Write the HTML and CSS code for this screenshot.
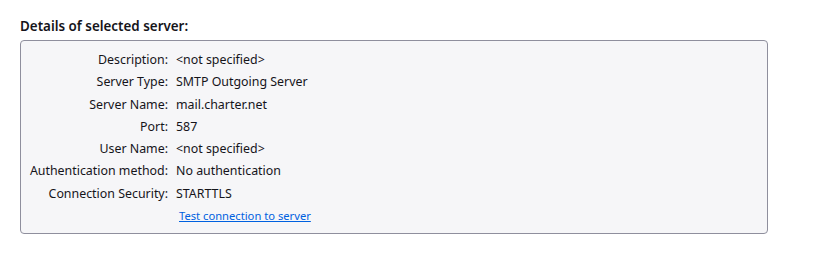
FILE: index.html
```html
<!DOCTYPE html>
<html lang="en">
<head>
  <meta charset="utf-8"/>
  <title>Server details</title>
  <link rel="stylesheet" href="styles.css">
</head>
<body>
  <div class="panel">
    <div class="panel-title">Details of selected server:</div>
    <div class="details">
      <div class="label">Description:</div><div class="value">&lt;not specified&gt;</div>
      <div class="label">Server Type:</div><div class="value">SMTP Outgoing Server</div>
      <div class="label">Server Name:</div><div class="value">mail.charter.net</div>
      <div class="label">Port:</div><div class="value">587</div>
      <div class="label">User Name:</div><div class="value">&lt;not specified&gt;</div>
      <div class="label">Authentication method:</div><div class="value">No authentication</div>
      <div class="label">Connection Security:</div><div class="value">STARTTLS</div>
      <div class="label"></div><div class="value link-row"><a class="test-link" href="#">Test connection to server</a></div>
    </div>
  </div>
</body>
</html>
```

FILE: styles.css
```css
body { margin:0; background:#fff; color:#15141a; font-family:"Noto Sans", "Liberation Sans", sans-serif; font-size:12.4px; }

.panel { padding:16px 0 0 20px; width:748px; }
.panel-title { font-size:13.4px; font-weight:600; line-height:20px; margin-bottom:4px; }

.details { display:grid; grid-template-columns:147px 1fr; column-gap:8px; align-items:center; background:#f6f6f8; border:1px solid #8f8f9d; border-radius:4px; padding:8px 0 7px; }
.label { text-align:right; line-height:22.3px; white-space:nowrap; }
.value { line-height:22.3px; white-space:nowrap; }
.value.link-row { line-height:21px; }

.test-link { color:#0061e0; font-size:11.2px; margin-left:3px; text-decoration:underline; }
```
